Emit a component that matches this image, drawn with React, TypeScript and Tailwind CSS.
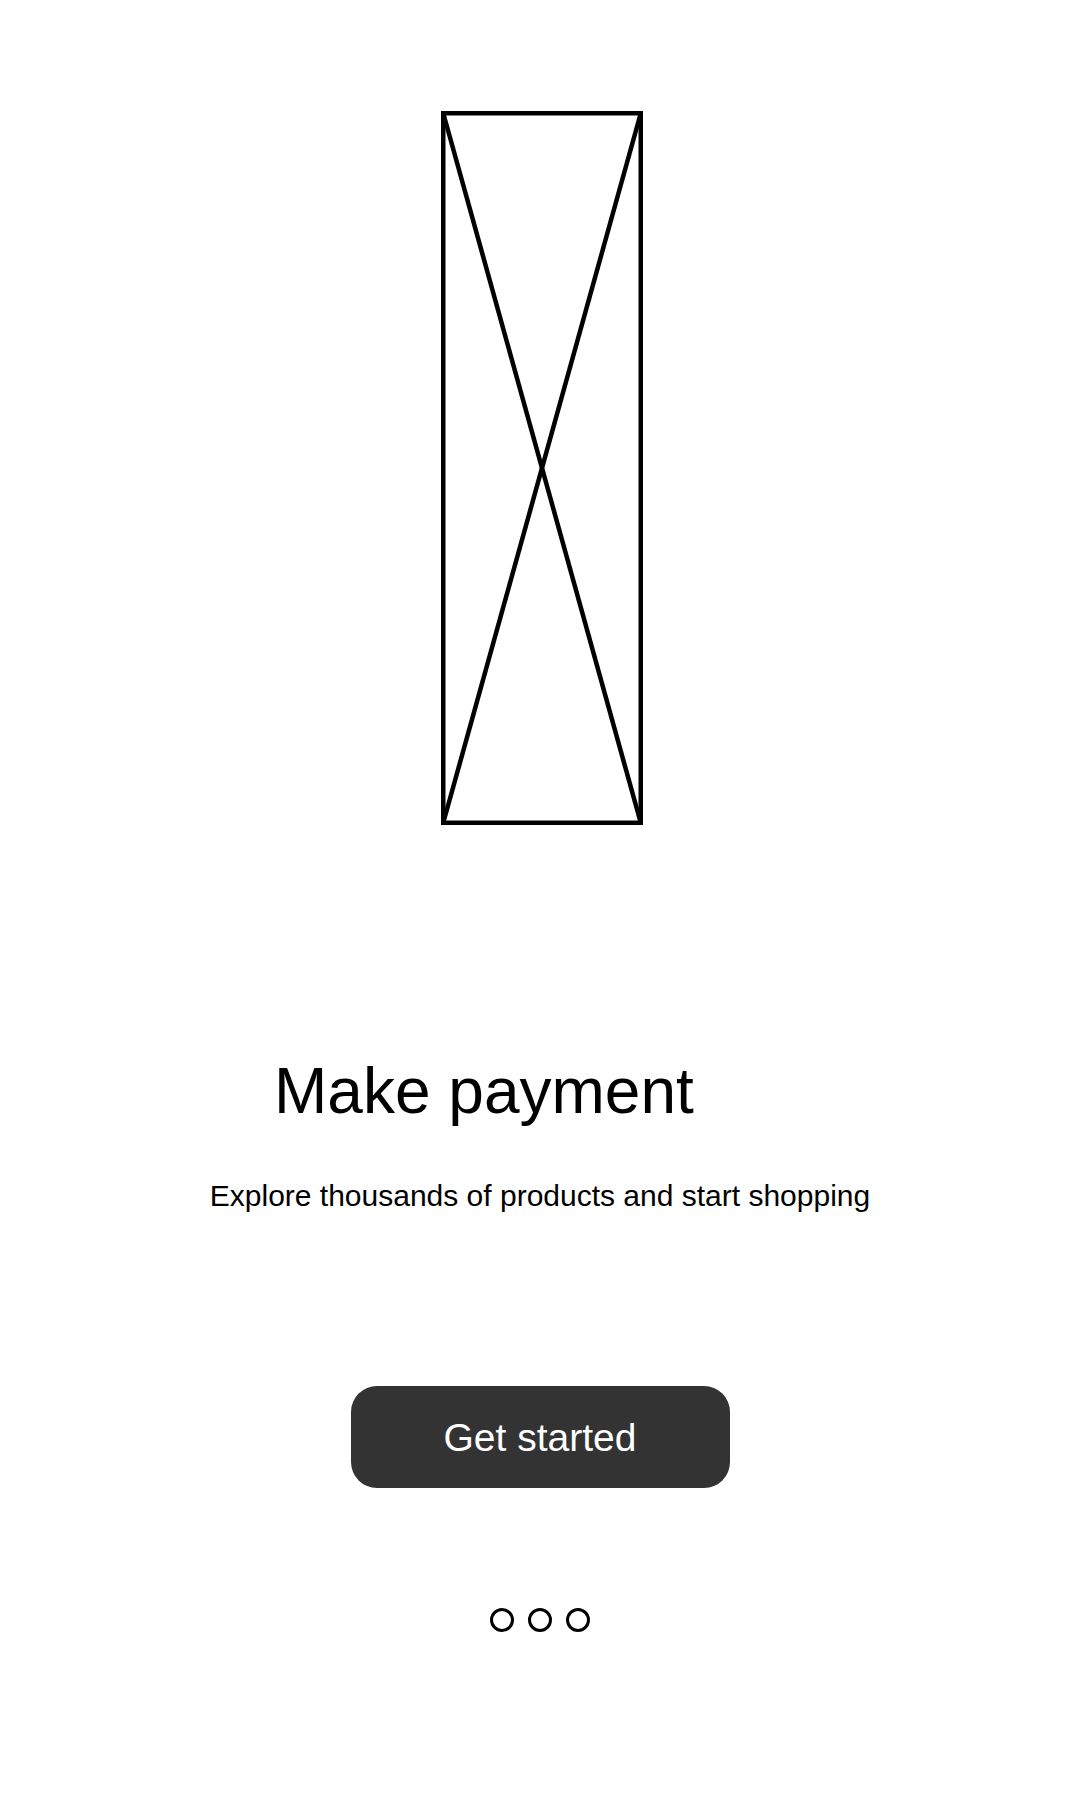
export default function App() {
  return (
    <div className="min-h-[1800px] w-[1080px] bg-white flex flex-col items-center pt-[111px]" style={{ fontFamily: '"Liberation Sans", Arial, sans-serif' }}>
      {/* image placeholder */}
      <svg className="ml-[4px]" width="202" height="714" viewBox="0 0 202 714" fill="none" stroke="#000">
        <rect x="2.25" y="2.25" width="197.5" height="709.5" strokeWidth="4.5" />
        <line x1="2.25" y1="2.25" x2="199.75" y2="711.75" strokeWidth="4.5" />
        <line x1="199.75" y1="2.25" x2="2.25" y2="711.75" strokeWidth="4.5" />
      </svg>

      <div className="w-full pl-[274px] mt-[234px]">
        <h1 className="text-[64px] leading-none text-black">Make payment</h1>
      </div>

      <p className="mt-[58px] text-[30px] leading-none text-black">Explore thousands of products and start shopping</p>

      <button className="mt-[175px] w-[379px] h-[102px] rounded-[26px] bg-[#333333] text-white text-[39px] leading-none">
        Get started
      </button>

      <div className="mt-[120px] flex gap-[14px]">
        <span className="w-[24px] h-[24px] rounded-full border-[3px] border-black" />
        <span className="w-[24px] h-[24px] rounded-full border-[3px] border-black" />
        <span className="w-[24px] h-[24px] rounded-full border-[3px] border-black" />
      </div>
    </div>
  );
}
